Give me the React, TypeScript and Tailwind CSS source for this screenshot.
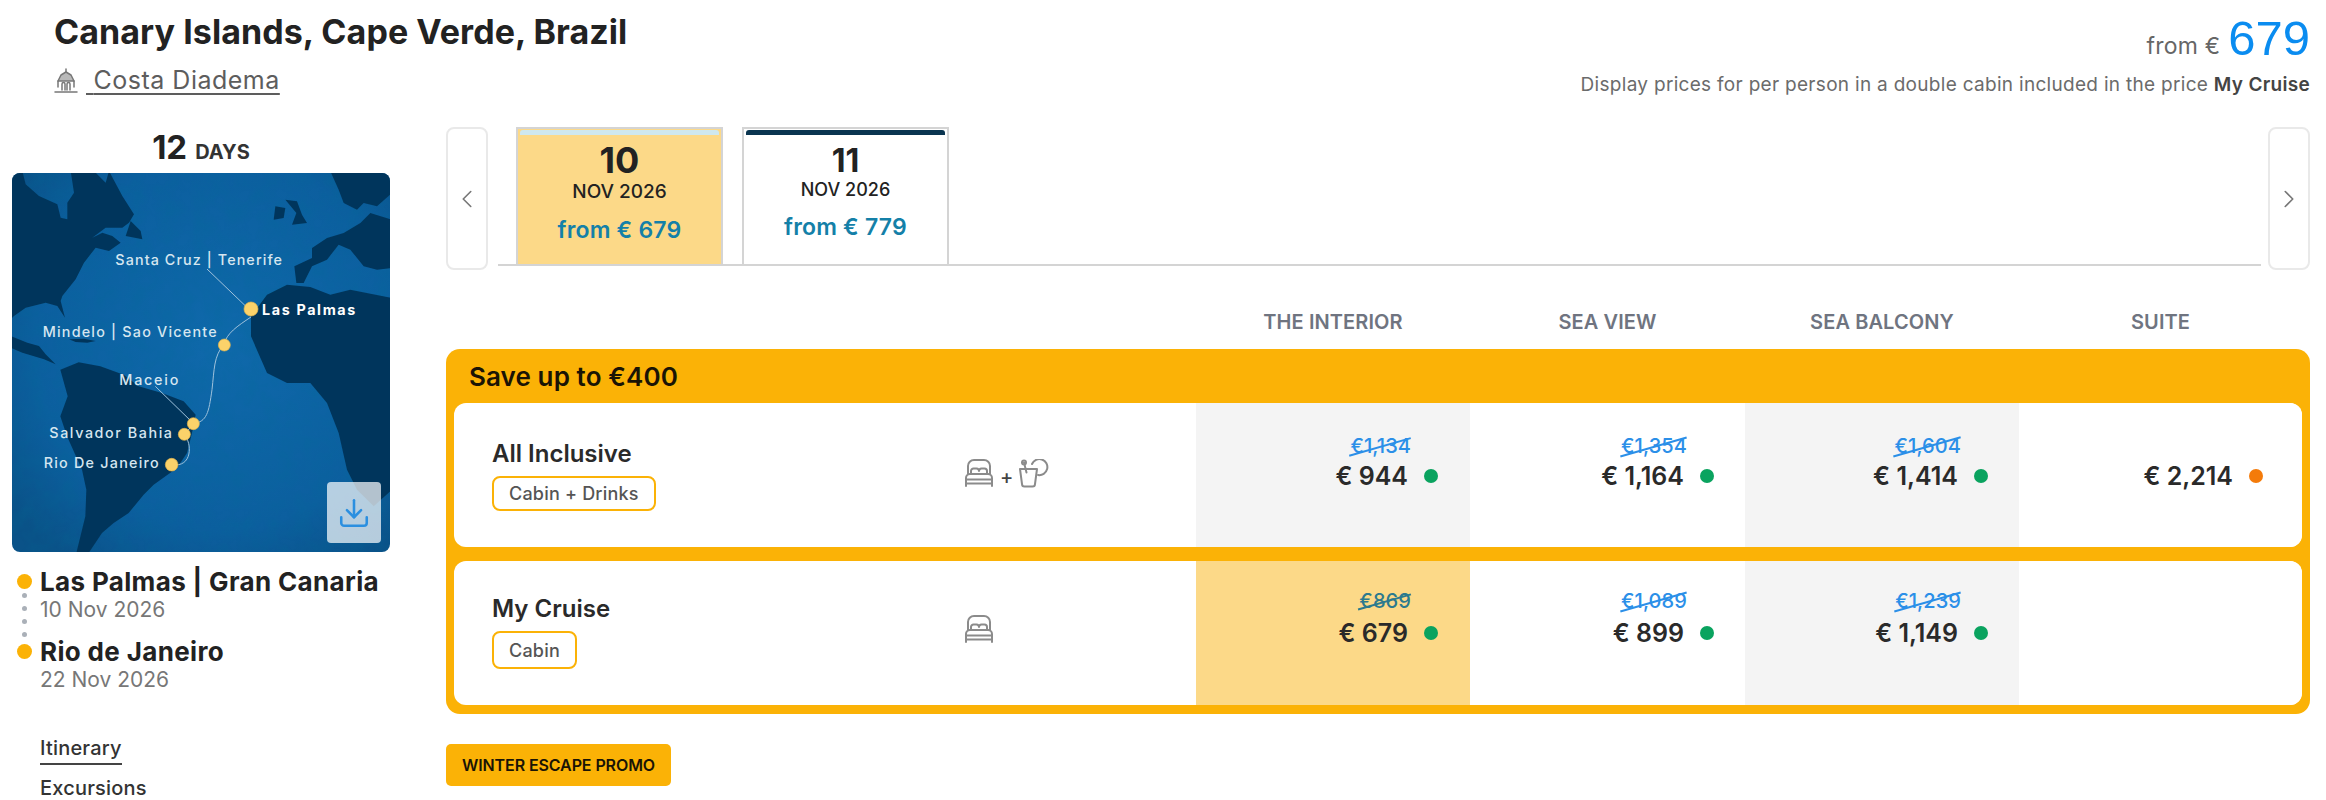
import { ChevronLeft, ChevronRight, Download } from "lucide-react";

const Bed = () => (
  <svg width="30" height="29" viewBox="0 0 30 29" fill="none" stroke="#8b8b8b" strokeWidth="2" strokeLinecap="round" strokeLinejoin="round">
    <path d="M4 15V7a6 6 0 0 1 6-6h10a6 6 0 0 1 6 6v8" />
    <path d="M7 15v-3a2.500 2.500 0 0 1 2.500-2.500h3A2.500 2.500 0 0 1 15 12a2.500 2.500 0 0 1 2.500-2.500h3A2.500 2.500 0 0 1 23 12v3" />
    <path d="M2 27v-8a4 4 0 0 1 4-4h18a4 4 0 0 1 4 4v8" />
    <path d="M2 20.500h26M2 24.500h26" />
  </svg>
);

const Drink = () => (
  <svg width="30" height="29" viewBox="0 0 30 29" fill="none" stroke="#8b8b8b" strokeWidth="2" strokeLinecap="round" strokeLinejoin="round">
    <path d="M1 10h17l-2 15a2.500 2.500 0 0 1-2.500 2.500h-8A2.500 2.500 0 0 1 3 25z" />
    <path d="M5 3.500l2.500 10" />
    <circle cx="5" cy="3.500" r="2" />
    <path d="M13 5a8 8 0 1 1 6 11" />
  </svg>
);

const ShipIcon = () => (
  <svg width="24" height="25" viewBox="0 0 24 25" fill="none" stroke="#777777" strokeWidth="1.500" strokeLinecap="round" strokeLinejoin="round">
    <path d="M12 1v3" />
    <path d="M4 13l3-6 5-3 5 3 3 6" fill="#b9b9b9" />
    <path d="M4 13v6M20 13v6M4 13h16" />
    <path d="M8 22v-6a1.500 1.500 0 0 1 3 0v6M13 22v-6a1.500 1.500 0 0 1 3 0v6" />
    <path d="M1 24h22" />
  </svg>
);

const WorldMap = () => (
  <svg className="block h-full w-full" viewBox="5 10 1134 1137" preserveAspectRatio="none" fontFamily="Inter, sans-serif" fontSize="43" fontWeight="500" fill="#d6e6f0">
    <defs>
      <radialGradient id="sea" cx="55%" cy="45%" r="70%">
        <stop offset="0%" stopColor="#0f69ab" />
        <stop offset="70%" stopColor="#0c5f9f" />
        <stop offset="100%" stopColor="#0a5288" />
      </radialGradient>
      <filter id="grain" x="0" y="0" width="100%" height="100%">
        <feTurbulence type="fractalNoise" baseFrequency="0.02" numOctaves="3" seed="4" />
        <feColorMatrix values="0 0 0 0 0 0 0 0 0 0.15 0 0 0 0 0.3 0 0 0 0.7 -0.22" />
      </filter>
      <filter id="soft">
        <feGaussianBlur stdDeviation="2" />
      </filter>
    </defs>
    <rect x="5" y="10" width="1134" height="1137" fill="url(#sea)" />
    <rect x="5" y="10" width="1134" height="1137" filter="url(#grain)" opacity="0.6" />
    <g fill="#05365c" filter="url(#soft)">
      {/* north america */}
      <g transform="translate(6 9)">
        <path d="M-5 -5H30L40 35 80 70 135 95 145 135 165 140 165 90 185 60 175 -5H245L280 30 290 -5 330 70 365 125 350 150 330 165 280 165 240 195 270 180 300 190 325 210 290 235 250 225 215 270 190 320 150 370 145 385 158 435 135 400 100 390 40 405 5 430 -5 440z" />
        <path d="M-5 490L45 510 80 520 100 545 130 575 95 560 30 540 -5 525z" />
        <path d="M355 145L385 175 390 200 340 190z" />
        <path d="M170 500L215 498 250 505 225 510 190 508z" />
      </g>
      {/* south america */}
      <path d="M150 600L205 578 270 590 340 615 385 650 455 670 520 695 556 735 545 790 530 850 500 895 430 945 400 975 355 1030 310 1060 275 1090 235 1150 198 1150 225 1040 228 960 215 900 170 800 150 740 172 680z" />
      {/* africa */}
      <path d="M722 500L722 440 770 375 830 345 900 352 960 375 1020 360 1145 385 1145 960 1090 1010 1040 960 1010 900 985 790 950 700 900 640 830 640 770 610z" />
      {/* europe */}
      <path d="M858 340L852 290 905 265 905 235 950 205 1000 190 1050 160 1080 130 1145 150 1145 295 1100 300 1060 290 1020 240 985 225 950 270 905 290 880 340z" />
      <path d="M960 5L985 60 1000 100 1040 120 1060 100 1100 110 1145 70 1145 5z" />
      {/* british isles */}
      <path d="M825 90L860 95 875 135 890 160 845 165 858 130z" />
      <path d="M795 110L825 115 820 145 790 150z" />
    </g>

    <g fill="none" stroke="#9fc2dc" strokeWidth="3">
      <path d="M590 298L715 418" />
      <path d="M435 650L548 760" />
      <path d="M722 442C680 470 650 490 640 525 610 560 612 600 605 660 595 730 590 755 550 762L522 795C545 820 548 895 484 885" />
    </g>

    <text x="315" y="286" textLength="500">Santa Cruz | Tenerife</text>
    <text x="755" y="436" textLength="280" fontWeight="700" fill="#ffffff">Las Palmas</text>
    <text x="97" y="502" textLength="522">Mindelo | Sao Vicente</text>
    <text x="327" y="646" textLength="177">Maceio</text>
    <text x="117" y="806" textLength="368">Salvador Bahia</text>
    <text x="100" y="896" textLength="345">Rio De Janeiro</text>

    <g fill="#fbd26a" stroke="#e9b64a" strokeWidth="2">
      <circle cx="722" cy="418" r="21" />
      <circle cx="642" cy="526" r="18" />
      <circle cx="549" cy="762" r="18" />
      <circle cx="522" cy="794" r="18" />
      <circle cx="484" cy="885" r="19" />
    </g>
  </svg>
);

const Strike = ({ value, color }: { value: string; color: string }) => (
  <span className={`relative mr-[27px] text-[20px] leading-[24px] font-medium tracking-[0.1px] ${color}`}>
    {value}
    <span className="absolute top-[50%] right-[-1px] left-[-2px] h-[2px] -rotate-[16deg] bg-current" />
  </span>
);

type Cell = { old?: string; price: string; dot?: string; bg: string; width: string; pr: string; oldColor?: string };

const rows: {
  name: string;
  badge: string;
  top: string;
  badgeH: string;
  cellTop: string;
  priceGap: string;
  iconShift: string;
  drink: boolean;
  cells: Cell[];
}[] = [
  {
    name: "All Inclusive",
    badge: "Cabin + Drinks",
    top: "pt-[37px]",
    badgeH: "h-[35px]",
    cellTop: "pt-[31px]",
    priceGap: "mt-[2px]",
    iconShift: "pb-[4px]",
    drink: true,
    cells: [
      { old: "€1,134", price: "€ 944", dot: "bg-[#0aa35f]", bg: "bg-[#f4f4f4]", width: "w-[274px]", pr: "pr-[32px]" },
      { old: "€1,354", price: "€ 1,164", dot: "bg-[#0aa35f]", bg: "bg-white", width: "w-[275px]", pr: "pr-[31px]" },
      { old: "€1,604", price: "€ 1,414", dot: "bg-[#0aa35f]", bg: "bg-[#f4f4f4]", width: "w-[274px]", pr: "pr-[31px]" },
      { price: "€ 2,214", dot: "bg-[#f47b0a]", bg: "bg-white", width: "w-[283px]", pr: "pr-[39px]" },
    ],
  },
  {
    name: "My Cruise",
    badge: "Cabin",
    top: "pt-[34px]",
    badgeH: "h-[38px]",
    cellTop: "pt-[28px]",
    priceGap: "mt-[4px]",
    iconShift: "pb-[7px]",
    drink: false,
    cells: [
      { old: "€869", price: "€ 679", dot: "bg-[#0aa35f]", bg: "bg-[#fcd988]", width: "w-[274px]", pr: "pr-[32px]", oldColor: "text-[#2c7a8e]" },
      { old: "€1,089", price: "€ 899", dot: "bg-[#0aa35f]", bg: "bg-white", width: "w-[275px]", pr: "pr-[31px]" },
      { old: "€1,239", price: "€ 1,149", dot: "bg-[#0aa35f]", bg: "bg-[#f4f4f4]", width: "w-[274px]", pr: "pr-[31px]" },
      { price: "", bg: "bg-white", width: "w-[283px]", pr: "pr-[39px]" },
    ],
  },
];

const columns = [
  { label: "THE INTERIOR", width: "w-[274px]" },
  { label: "SEA VIEW", width: "w-[275px]" },
  { label: "SEA BALCONY", width: "w-[274px]" },
  { label: "SUITE", width: "w-[283px]" },
];

export default function App() {
  return (
    <div className="h-[800px] w-[2326px] overflow-hidden bg-white font-['Inter',sans-serif] text-[#222222]">
      {/* header */}
      <div className="flex h-[127px] justify-between pr-[16px] pl-[54px]">
        <div>
          <h1 className="pt-[12px] text-[34px] leading-[40px] font-bold tracking-[0.07px]">Canary Islands, Cape Verde, Brazil</h1>
          <a className="mt-[13px] flex items-center text-[25px] leading-[30px] tracking-[0.5px] text-[#5d5d5d]">
            <ShipIcon />
            <span className="ml-[8px] underline underline-offset-[4px] decoration-2">{"\u00a0"}Costa Diadema</span>
          </a>
        </div>
        <div className="flex flex-col items-end">
          <div className="flex h-[63px] items-end">
            <span className="mb-[3px] text-[23px] leading-[28px] tracking-[0.2px] text-[#666666]">from €</span>
            <span className="ml-[8px] font-['Liberation_Sans',sans-serif] text-[49px] leading-[50px] text-[#0a8cf0]">679</span>
          </div>
          <p className="mt-[10px] text-[19px] leading-[24px] tracking-[0.3px] text-[#6b6b6b]">
            Display prices for per person in a double cabin included in the price <b className="font-semibold text-[#444444]">My Cruise</b>
          </p>
        </div>
      </div>

      <div className="flex gap-[56px] pr-[16px] pl-[12px]">
        {/* left column */}
        <aside className="w-[378px] shrink-0">
          <div className="flex h-[46px] items-baseline justify-center gap-[8px]">
            <span className="text-[33px] leading-[40px] font-bold">12</span>
            <span className="text-[20px] leading-[24px] font-bold text-[#333333]">DAYS</span>
          </div>
          <div className="relative h-[379px] overflow-hidden rounded-[8px]">
            <WorldMap />
            <button className="absolute right-[9px] bottom-[9px] flex h-[61px] w-[54px] items-center justify-center rounded-[4px] bg-white/70 text-[#2b8fe0]">
              <Download size={34} strokeWidth={1.8} />
            </button>
          </div>
          <div className="relative mt-[16px] pl-[28px]">
            <div className="absolute top-[6px] left-[5px] flex flex-col items-center">
              <span className="h-[15px] w-[15px] rounded-full bg-[#fbb206]" />
              <span className="mt-[4px] h-[5px] w-[5px] rounded-full bg-[#aab0b8]" />
              <span className="mt-[8px] h-[5px] w-[5px] rounded-full bg-[#aab0b8]" />
              <span className="mt-[8px] h-[5px] w-[5px] rounded-full bg-[#aab0b8]" />
              <span className="mt-[8px] h-[5px] w-[5px] rounded-full bg-[#aab0b8]" />
              <span className="mt-[7px] h-[15px] w-[15px] rounded-full bg-[#fbb206]" />
            </div>
            <p className="text-[26px] leading-[28px] font-bold tracking-[0.35px]">Las Palmas | Gran Canaria</p>
            <p className="text-[21px] leading-[28px] text-[#777777]">10 Nov 2026</p>
            <p className="mt-[14px] text-[26px] leading-[28px] font-bold tracking-[0.35px]">Rio de Janeiro</p>
            <p className="text-[21px] leading-[28px] text-[#777777]">22 Nov 2026</p>
          </div>
          <nav className="mt-[40px] pl-[28px] text-[20px] font-medium tracking-[0.2px] text-[#333333]">
            <div className="w-fit border-b-2 border-[#444444] pb-[1px] leading-[28px]">Itinerary</div>
            <div className="mt-[9px] leading-[28px]">Excursions</div>
          </nav>
        </aside>

        {/* main column */}
        <main className="min-w-0 flex-1">
          <div className="flex">
            <button className="flex h-[143px] w-[42px] shrink-0 items-center justify-center rounded-[8px] border-2 border-[#e9e9e9] text-[#777777]">
              <ChevronLeft size={30} strokeWidth={1.3} />
            </button>
            <div className="mr-[7px] ml-[10px] flex h-[139px] flex-1 items-end gap-[19px] border-b-2 border-[#d4d4d4] pl-[18px]">
              <div className="relative flex h-[137px] w-[207px] flex-col items-center border-2 border-b-0 border-[#d4d4d4] bg-[#fcd988] pt-[10px]">
                <span className="absolute top-[1px] right-[2px] left-[2px] h-[5px] rounded-t-[3px] bg-[#cfe8ef]" />
                <span className="text-[36px] leading-[42px] font-bold">10</span>
                <span className="text-[19px] leading-[22px] font-medium">NOV 2026</span>
                <span className="mt-[13px] text-[23px] leading-[28px] font-semibold tracking-[0.2px] text-[#1480a8]">from € 679</span>
              </div>
              <div className="relative flex h-[137px] w-[207px] flex-col items-center border-2 border-b-0 border-[#d4d4d4] bg-white pt-[13px]">
                <span className="absolute top-[1px] right-[2px] left-[2px] h-[5px] rounded-t-[3px] bg-[#0a3550]" />
                <span className="text-[32px] leading-[38px] font-bold">11</span>
                <span className="text-[18px] leading-[20px] font-medium">NOV 2026</span>
                <span className="mt-[13px] text-[23px] leading-[28px] font-semibold tracking-[0.2px] text-[#1480a8]">from € 779</span>
              </div>
            </div>
            <button className="flex h-[143px] w-[42px] shrink-0 items-center justify-center rounded-[8px] border-2 border-[#e9e9e9] text-[#777777]">
              <ChevronRight size={30} strokeWidth={1.3} />
            </button>
          </div>

          <div className="flex h-[79px] pt-[34px] pl-[750px]">
            {columns.map((c) => (
              <div key={c.label} className={`${c.width} text-center text-[20px] leading-[36px] font-semibold tracking-[0.1px] text-[#6f7480]`}>
                {c.label}
              </div>
            ))}
          </div>

          <div className="rounded-[14px] bg-[#fbb206] px-[8px] pb-[9px]">
            <div className="flex h-[54px] items-center pl-[15px] text-[26px] font-semibold tracking-[0.1px] text-[#1a1405]">Save up to €400</div>
            <div className="flex flex-col gap-[14px]">
              {rows.map((r) => (
                <div key={r.name} className="flex h-[144px] overflow-hidden rounded-[12px] bg-white">
                  <div className="flex w-[742px] shrink-0">
                    <div className={`w-[510px] pl-[38px] ${r.top}`}>
                      <div className="text-[24px] leading-[28px] font-semibold text-[#2a2a2a]">{r.name}</div>
                      <span className={`mt-[8px] inline-flex items-center rounded-[8px] border-2 border-[#fbb206] px-[15px] text-[18px] font-medium tracking-[0.2px] text-[#555555] ${r.badgeH}`}>
                        {r.badge}
                      </span>
                    </div>
                    <div className={`flex items-center ${r.iconShift}`}>
                      <Bed />
                      {r.drink && <span className="mx-[6px] mt-[8px] text-[20px] leading-none font-medium text-[#444444]">+</span>}
                      {r.drink && <Drink />}
                    </div>
                  </div>
                  {r.cells.map((c, i) => (
                    <div key={i} className={`flex shrink-0 flex-col items-end ${c.width} ${c.bg} ${c.pr} ${r.cellTop}`}>
                      {c.old ? <Strike value={c.old} color={c.oldColor ?? "text-[#2b8fe8]"} /> : <span className="h-[24px]" />}
                      {c.price && (
                        <div className={`flex items-center gap-[16px] ${r.priceGap}`}>
                          <span className="text-[25px] leading-[32px] font-semibold text-[#2a2a2a]">{c.price}</span>
                          <span className={`h-[14px] w-[14px] rounded-full ${c.dot}`} />
                        </div>
                      )}
                    </div>
                  ))}
                </div>
              ))}
            </div>
          </div>

          <button className="mt-[30px] flex h-[42px] w-[225px] items-center justify-center rounded-[5px] bg-[#fbb206] text-[16px] font-semibold tracking-[-0.1px] text-[#1a1405]">
            WINTER ESCAPE PROMO
          </button>
        </main>
      </div>
    </div>
  );
}
